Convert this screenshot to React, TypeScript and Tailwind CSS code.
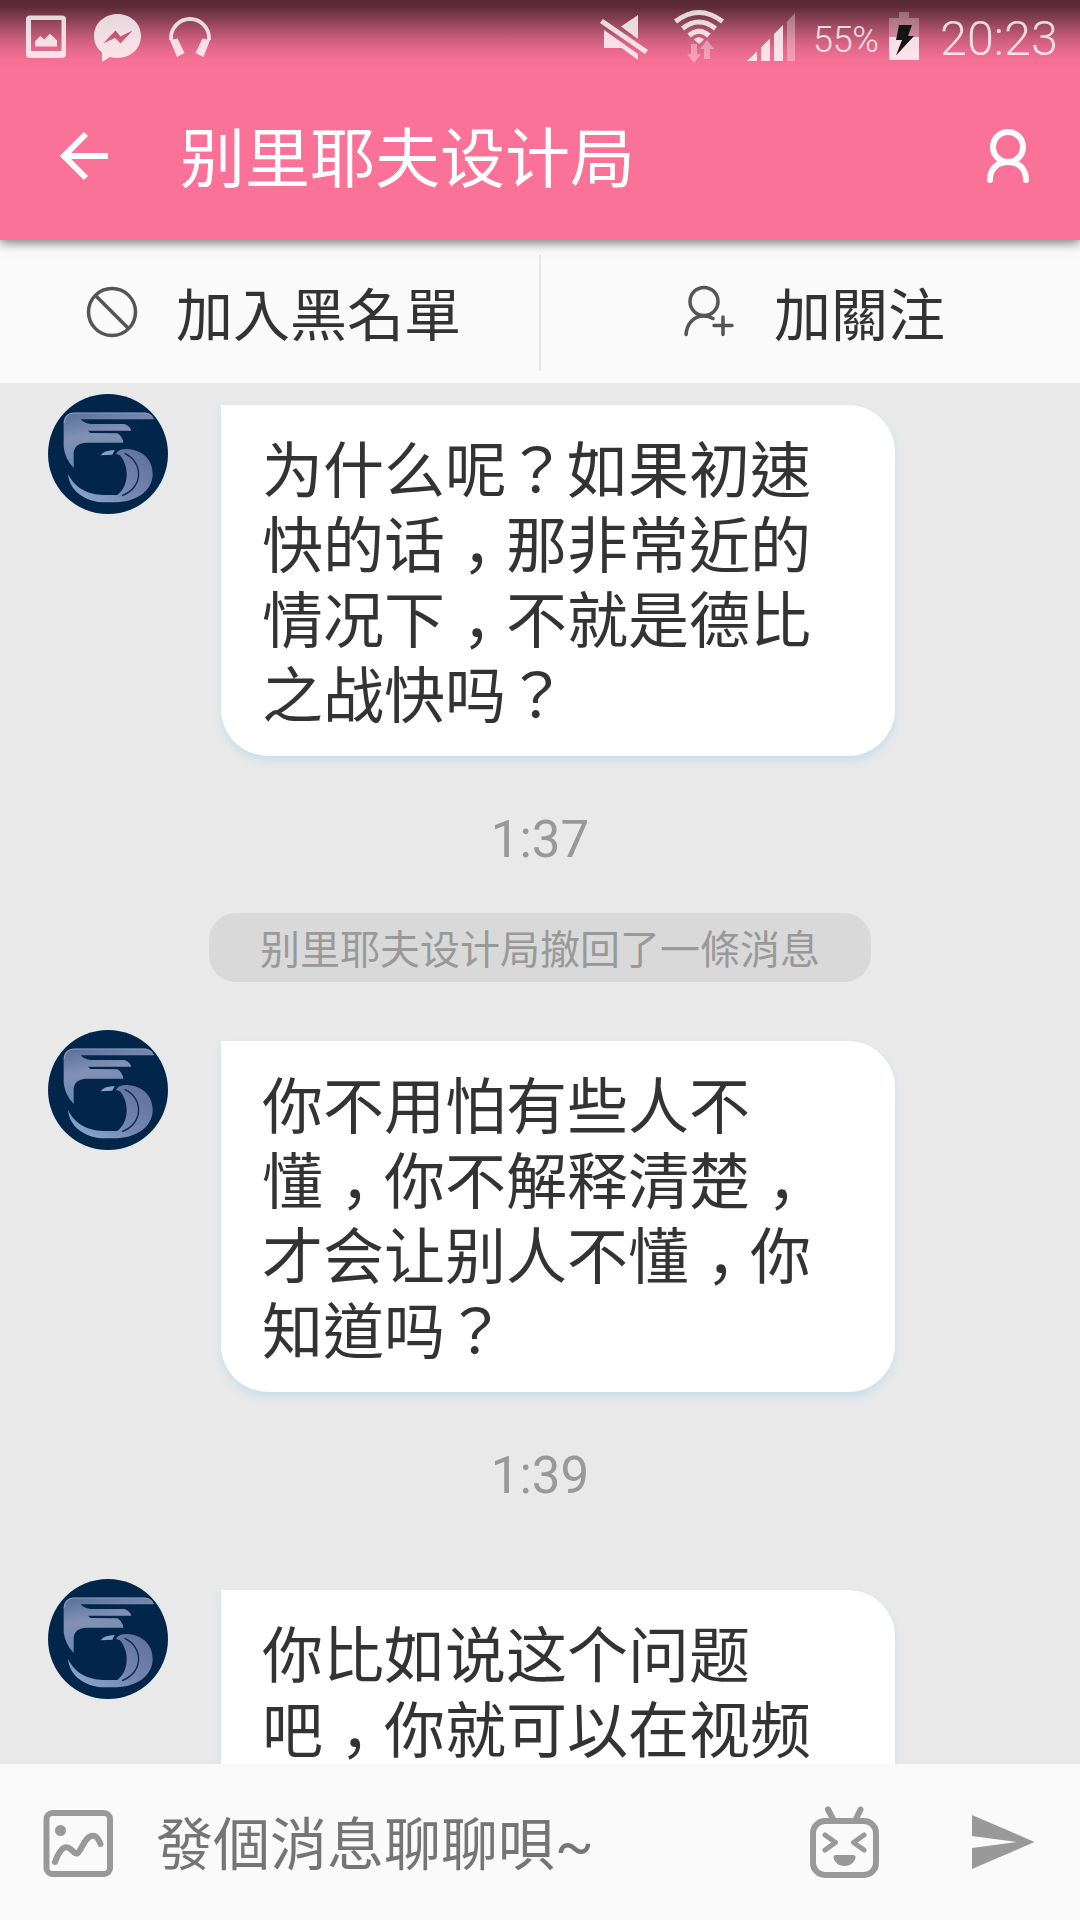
import type { ReactNode } from 'react'

const MESSAGES = [
  {
    lines: ['为什么呢？如果初速', '快的话，那非常近的', '情况下，不就是德比', '之战快吗？'],
    time: '1:37',
    recall: '别里耶夫设计局撤回了一條消息',
  },
  {
    lines: ['你不用怕有些人不', '懂，你不解释清楚，', '才会让别人不懂，你', '知道吗？'],
    time: '1:39',
  },
  {
    lines: ['你比如说这个问题', '吧，你就可以在视频'],
  },
]

function StatusBar() {
  return (
    <div className="flex h-[70px] items-start bg-[linear-gradient(to_bottom,#562633_0px,#5f2b3a_7px,#7b3b4e_16px,#a94f69_29px,#cd5f7e_40px,#e5698c_50px,#f57095_60px,#fb7299_70px)] pl-[26px] text-white/80">
      <svg width="40" height="70" viewBox="26 0 40 70" fill="currentColor">
        <path fillRule="evenodd" d="M30 15.500H62Q66 15.500 66 19.500V54Q66 58 62 58H30Q26 58 26 54V19.500Q26 15.500 30 15.500ZM31 20V51H61.500V20Z" />
        <path d="M35 41.500 40.300 36 44.300 39.500 50 33.700 57 40.500V46.500H35Z" />
      </svg>
      <svg className="ml-7" width="48" height="70" viewBox="94 0 48 70" fill="currentColor">
        <path fillRule="evenodd" d="M117.500 14C130.500 14 141 23.500 141 36S130.500 58 117.500 58Q113.500 58 110 57L102 62V52.500Q94 46.500 94 36C94 23.500 104.500 14 117.500 14ZM103 43.500 115 38 120.500 43.500 132.500 30.500 120.500 36.500 115.500 30.500Z" />
      </svg>
      <svg className="ml-[26px]" width="46" height="70" viewBox="168 0 46 70" fill="currentColor">
        <path d="M171 40V38a19 19 0 0 1 38 0V40" fill="none" stroke="currentColor" strokeWidth="3.800" />
        <path d="M170 40 177.500 38.500 184.500 53 177 57ZM210 40 202.500 38.500 195.500 53 203.500 57Z" />
      </svg>

      <div className="ml-[386px] flex items-start">
        <svg width="48" height="70" viewBox="600 0 48 70" fill="currentColor">
          <path d="M600 23 603 19 648 50 645 54Z" />
          <path d="M621 26.500 638 15V39ZM604 30 638 54V60L621.500 48H604Z" />
        </svg>
        <svg className="ml-[25px]" width="52" height="70" viewBox="673 0 52 70" fill="none" stroke="currentColor" strokeWidth="5">
          <path d="M675.500 21.500Q699 3.500 722.500 21.500M682.500 28.500Q699 15.500 715.500 28.500M689 35.500Q699 27 709 35.500" />
          <path d="M694 39.500Q699 35 704 39.500L699 44Z" fill="currentColor" stroke="none" />
          <path d="M691 44H697V54H701L694 63 687 54H691ZM704 59V49H700L707 40 714 49H710V59Z" fill="white" fillOpacity="0.35" stroke="none" />
        </svg>
        <svg className="ml-[22px]" width="48" height="70" viewBox="747 0 48 70" fill="currentColor">
          <path d="M747 61 757 51.500V61ZM761 47.500 770 38.500V61H761ZM774 34 783 25V61H774Z" />
          <path d="M787 21.500 795 13V61H787Z" fillOpacity="0.4" />
        </svg>
        <span className="ml-[18px] w-[66px] text-[36px] font-light leading-[80px] tracking-[-0.3px]">55%</span>
        <svg className="ml-[10px]" width="30" height="70" viewBox="889 0 30 70">
          <path d="M899 12H909V18H919V37H889V18H899Z" fill="white" fillOpacity="0.28" />
          <path d="M889 37H919V60H889Z" fill="white" fillOpacity="0.8" />
          <path d="M899 25H912L908 36H914L896 55.500 902 40H896Z" fill="#151515" />
        </svg>
        <span className="ml-[21px] text-[48.500px] font-light leading-[77px]">20:23</span>
      </div>
    </div>
  )
}

function Avatar() {
  return (
    <svg className="shrink-0" width="120" height="120" viewBox="54 42 360 360">
      <defs>
        <linearGradient id="metalTop" x1="0" y1="0" x2="0.3" y2="1">
          <stop offset="0" stopColor="#566f99" />
          <stop offset="0.45" stopColor="#8390b4" />
          <stop offset="1" stopColor="#6789b4" />
        </linearGradient>
        <linearGradient id="metalRing" x1="1" y1="0" x2="0" y2="1">
          <stop offset="0" stopColor="#5f6d9b" />
          <stop offset="0.55" stopColor="#7587ae" />
          <stop offset="1" stopColor="#8fb0d2" />
        </linearGradient>
      </defs>
      <circle cx="234" cy="222" r="180" fill="#01264a" />
      <path d="M101 125C103 106 114 98 130 98H348Q366 103 373 118H152Q164 131 182 132H284Q300 138 304 152H174L181 159L262 160Q278 170 280 188H165Q135 191 131 215V264Q104 235 101 200Z" fill="url(#metalTop)" />
      <path d="M102 130Q106 100 130 99H346Q360 101 368 110" fill="none" stroke="#9aabc9" strokeWidth="2.500" />
      <path d="M212 226Q222 211 254 210L247 224Z" fill="#8ba0c6" />
      <path d="M258 222Q264 207 290 207C342 210 369 242 368 285C365 335 318 367 250 367H215C160 362 118 330 114 282C138 330 180 346 235 345H262C296 320 300 262 270 226Z" fill="url(#metalRing)" />
      <path d="M284 220C340 246 342 322 276 347" fill="none" stroke="#0b2b52" strokeWidth="4" />
    </svg>
  )
}

// Full-width comma sits low and in the middle of its cell
function renderLine(line: string): ReactNode[] {
  return line.split(/(，)/).filter(Boolean).map((part, i) =>
    part === '，' ? (
      <span key={i} className="inline-block w-[61px] pl-[17px] font-['Noto_Sans_CJK_SC',sans-serif]" lang="zh-CN">
        <span className="block w-[30px]">，</span>
      </span>
    ) : (
      part
    ),
  )
}

function Message({ lines }: { lines: string[] }) {
  return (
    <div className="flex shrink-0 items-start pl-12">
      <Avatar />
      <div className="ml-[53px] mt-[11px] h-[351px] w-[674px] rounded-[47px] rounded-tl-none bg-white pl-[41px] pt-[24px] font-['Noto_Sans_CJK_TC',sans-serif] text-[61px] leading-[75px] text-[#333] shadow-[0_5px_9px_#c9dfec]">
        {lines.map((line) => (
          <p key={line} className="h-[75px] whitespace-nowrap">{renderLine(line)}</p>
        ))}
      </div>
    </div>
  )
}

export default function App() {
  return (
    <div className="flex h-[1920px] w-[1080px] flex-col overflow-hidden bg-[#e9e9e9] font-[Roboto,'Noto_Sans_CJK_TC',sans-serif]">
      <header className="z-10 h-[240px] shrink-0 bg-[#fb7299] text-white shadow-[0_3px_10px_rgba(0,0,0,0.5)]">
        <StatusBar />
        <div className="flex h-[170px] items-center pl-[60px] pr-[50px]">
          <svg width="48" height="170" viewBox="60 70 48 170" fill="none" stroke="currentColor" strokeWidth="6">
            <path d="M108 156H65M86 134 64 156 86 178" />
          </svg>
          <h1 className="ml-[72px] pb-[2px] font-['Noto_Sans_CJK_TC',sans-serif] text-[65px] font-normal leading-[80px]">别里耶夫设计局</h1>
          <svg className="ml-auto" width="44" height="170" viewBox="986 70 44 170" fill="none" stroke="currentColor" strokeWidth="6" strokeLinecap="round">
            <circle cx="1008" cy="147" r="15" />
            <path d="M990 180C990 168 998 162 1008 162S1026 168 1026 180" />
          </svg>
        </div>
      </header>

      {/* 操作列 */}
      <div className="flex h-[143px] shrink-0 items-center bg-[#fafafa] font-['Noto_Sans_CJK_TC',sans-serif] text-[57px] text-[#333]">
        <button className="flex h-full w-[539px] items-center pl-[86px]">
          <svg width="52" height="143" viewBox="86 240 52 143" fill="none" stroke="#555" strokeWidth="3.500">
            <circle cx="112" cy="312" r="23.500" />
            <path d="M95.500 295.500 128.500 328.500" />
          </svg>
          <span className="ml-[38px] pb-[2px] leading-[80px]">加入黑名單</span>
        </button>
        <div className="mt-[2px] h-[117px] w-[2px] bg-[#e6e6e6]" />
        <button className="flex h-full flex-1 items-center pl-[142px]">
          <svg width="52" height="143" viewBox="683 240 52 143" fill="none" stroke="#555" strokeWidth="3.500" strokeLinecap="round">
            <circle cx="704" cy="301.500" r="14" />
            <path d="M686 334.500C687 323 694 316 704 316Q709 316 713 318.500M714 325.500H732M723 317V334.500" />
          </svg>
          <span className="ml-[39px] pb-[2px] leading-[80px]">加關注</span>
        </button>
      </div>

      {/* 聊天內容 */}
      <main className="flex min-h-0 flex-1 flex-col overflow-hidden pt-[11px]">
        {MESSAGES.map((msg) => (
          <div key={msg.lines[0]} className="flex shrink-0 flex-col">
            <Message lines={msg.lines} />
            {msg.time && (
              <p className={msg.recall ? 'mt-[47px] h-[110px] text-center text-[51px] leading-[73px] text-[#999]' : 'mt-[47px] h-[140px] text-center text-[51px] leading-[73px] text-[#999]'}>
                {msg.time}
              </p>
            )}
            {msg.recall && (
              <p className="mb-12 h-[69px] w-[662px] self-center rounded-[27px] bg-[#d9d9d9] text-center font-['Noto_Sans_CJK_TC',sans-serif] text-[40px] leading-[69px] text-[#999]">
                {msg.recall}
              </p>
            )}
          </div>
        ))}
      </main>

      {/* 輸入列 */}
      <footer className="flex h-[156px] shrink-0 items-center bg-[#fafafa] pl-[43px] text-[#999]">
        <svg width="70" height="156" viewBox="43 1764 70 156" fill="none" stroke="currentColor" strokeWidth="6" strokeLinecap="round">
          <rect x="46.500" y="1813" width="63.500" height="61" rx="6" />
          <circle cx="60.500" cy="1830.500" r="5.500" fill="currentColor" stroke="none" />
          <path d="M55 1862C59 1851 63 1846 68 1847.500C72 1849 74 1854 77 1853.500C81 1852 84 1838 91 1836C96 1835 98 1838 100.500 1844" />
        </svg>
        <span className="ml-[43px] pt-[8px] text-[57px] leading-[80px] text-[#757575]">發個消息聊聊唄~</span>
        <svg className="ml-auto" width="70" height="156" viewBox="810 1764 70 156" fill="none" stroke="currentColor" strokeWidth="6" strokeLinecap="round">
          <rect x="813" y="1821" width="63" height="54" rx="12" />
          <path d="M828 1809.500 833 1819M860.500 1809.500 856 1819" />
          <path d="M825 1835 835.500 1842.500 825 1850M864 1835 853.500 1842.500 864 1850" strokeWidth="5" strokeLinejoin="round" />
          <path d="M836 1855H853Q856 1855 855.500 1858C854 1863 850 1866 844.500 1866S835 1863 833.500 1858Q833 1855 836 1855Z" fill="currentColor" stroke="none" />
        </svg>
        <svg className="ml-[92px] mr-[45px]" width="63" height="156" viewBox="972 1764 63 156" fill="currentColor">
          <path d="M972 1815 1034.500 1842 972 1869V1848L1017 1842 972 1836Z" />
        </svg>
      </footer>
    </div>
  )
}
